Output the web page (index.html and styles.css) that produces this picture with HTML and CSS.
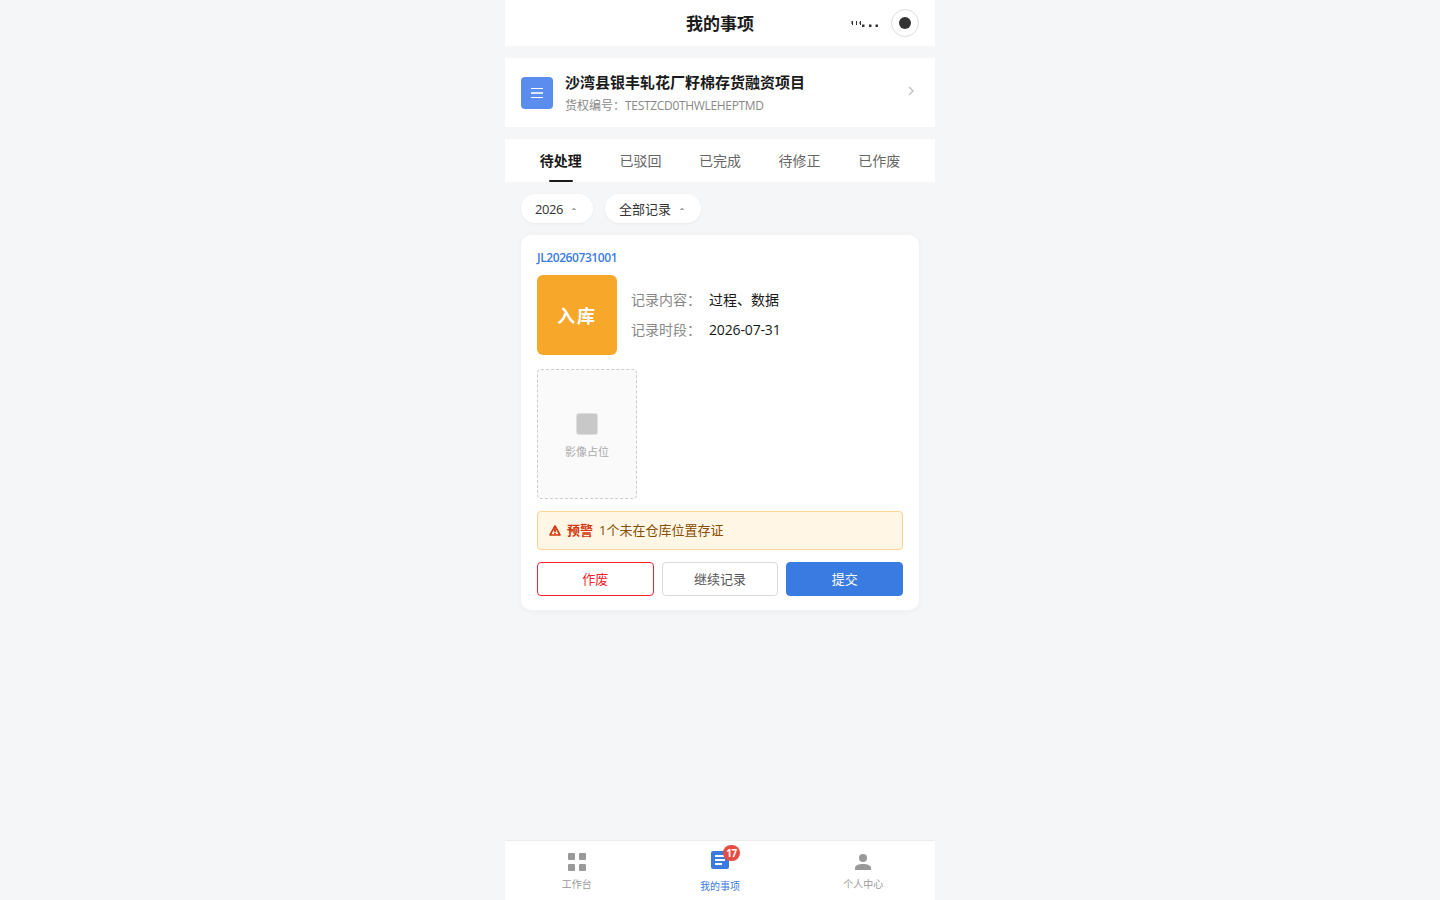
FILE: index.html
```html
<!DOCTYPE html>
<html lang="zh-CN">
<head>
<meta charset="UTF-8">
<title>我的事项</title>
<link rel="stylesheet" href="styles.css">
</head>
<body>
<div class="app">
  <header class="header">
    <h1 class="header-title">我的事项</h1>
    <div class="header-actions">
      <svg class="more" width="30" height="8" viewBox="0 0 30 8"><g fill="#333"><path d="M2 1h1v4H2zM6 1h1v4H6zM10 1h1v4h-1z"/><path d="M1 1h1v3H1zM9 2h1v2H9z" opacity=".5"/><path d="M12 4.500h2.500v2.500H12zM19 4.500h2.500v2.500H19zM25.500 4.500H28v2.500h-2.500z"/></g></svg>
      <span class="capsule"><span class="capsule-dot"></span></span>
    </div>
  </header>

  <section class="project">
    <div class="project-icon">
      <svg width="12" height="10" viewBox="0 0 12 10"><path d="M0 0h12v1H0zM0 9h12v1H0z" fill="#fff"/><path d="M0 4h12v2H0z" fill="#fff" opacity=".8"/></svg>
    </div>
    <div class="project-body">
      <div class="project-name">沙湾县银丰轧花厂籽棉存货融资项目</div>
      <div class="project-code">货权编号：<span class="code">TESTZCD0THWLEHEPTMD</span></div>
    </div>
    <svg class="chevron" width="8" height="10" viewBox="0 0 8 10"><path d="M2 1l4 4-4 4" fill="none" stroke="#c4c4c4" stroke-width="1.500"/></svg>
  </section>

  <nav class="tabs">
    <div class="tab active">待处理</div>
    <div class="tab">已驳回</div>
    <div class="tab">已完成</div>
    <div class="tab">待修正</div>
    <div class="tab">已作废</div>
  </nav>

  <main class="content">
    <div class="filters">
      <div class="filter"><span class="year">2026</span><svg class="caret" width="4" height="2" viewBox="0 0 4 2"><path d="M0 2V1h1V0h2v1h1v1z" fill="#aaa"/></svg></div>
      <div class="filter"><span>全部记录</span><svg class="caret" width="4" height="2" viewBox="0 0 4 2"><path d="M0 2V1h1V0h2v1h1v1z" fill="#aaa"/></svg></div>
    </div>

    <article class="card">
      <div class="card-no"><span>JL20260731001</span></div>
      <div class="summary">
        <div class="type">入库</div>
        <div class="info">
          <div class="info-row"><span class="label">记录内容：</span><span class="value">过程、数据</span></div>
          <div class="info-row"><span class="label">记录时段：</span><span class="value date">2026-07-31</span></div>
        </div>
      </div>
      <div class="photo">
        <div class="photo-icon"></div>
        <div class="photo-text">影像占位</div>
      </div>
      <div class="alert">
        <svg width="12" height="11" viewBox="0 0 12 11"><path d="M6 1L11 10H1z" fill="none" stroke="#d4380d" stroke-width="1.600" stroke-linejoin="round"/><path d="M6 3.500v3.500M6 7.800v1.400" stroke="#d4380d" stroke-width="1.800"/></svg>
        <strong class="alert-tag">预警</strong>
        <span class="alert-text">1个未在仓库位置存证</span>
      </div>
      <div class="actions">
        <button class="btn danger">作废</button>
        <button class="btn">继续记录</button>
        <button class="btn primary">提交</button>
      </div>
    </article>
  </main>

  <nav class="tabbar">
    <div class="tabbar-item">
      <svg width="18" height="18" viewBox="0 0 18 18" fill="#999"><rect width="7" height="7" rx="1"/><rect x="11" width="7" height="7" rx="1"/><rect y="11" width="7" height="7" rx="1"/><rect x="11" y="11" width="7" height="7" rx="1"/></svg>
      <span>工作台</span>
    </div>
    <div class="tabbar-item current">
      <div class="icon-wrap">
        <svg width="18" height="18" viewBox="0 0 18 18"><rect width="18" height="18" rx="2" fill="#3a7be2"/><path d="M4 4h10v2H4zM4 8h10v2H4zM4 12h7v2H4z" fill="#fff"/></svg>
        <span class="badge">17</span>
      </div>
      <span>我的事项</span>
    </div>
    <div class="tabbar-item">
      <svg width="18" height="18" viewBox="0 0 18 18" fill="#999"><circle cx="9" cy="5" r="4"/><path d="M1 17v-2c0-2.700 4-4 8-4s8 1.300 8 4v2z"/></svg>
      <span>个人中心</span>
    </div>
  </nav>
</div>
</body>
</html>
```
FILE: styles.css
```css
* { box-sizing: border-box; }
body {
  margin: 0;
  background: #f4f6f8;
  color: #1a1a1a;
  font-family: "Open Sans", "Noto Sans CJK SC", sans-serif;
  font-size: 14px;
}
svg { display: block; flex: none; }
.app {
  width: 430px;
  height: 900px;
  margin: 0 auto;
  display: flex;
  flex-direction: column;
}
.header {
  height: 46px;
  background: #fff;
  display: grid;
  grid-template-columns: 1fr auto 1fr;
  align-items: center;
  padding: 0 16px;
}
.header-title {
  grid-column: 2;
  margin: 0;
  padding-top: 2px;
  font-size: 17px;
  line-height: 24px;
  font-weight: 700;
}
.header-actions {
  display: flex;
  align-items: center;
  justify-content: flex-end;
  gap: 11px;
}
.more { margin-top: 2px; }
.capsule {
  width: 28px;
  height: 28px;
  border: 1px solid #ddd;
  border-radius: 50%;
  display: flex;
  align-items: center;
  justify-content: center;
}
.capsule-dot { width: 12px; height: 12px; border-radius: 50%; background: #333; }

.project {
  height: 69px;
  margin-top: 12px;
  padding: 0 20px 0 16px;
  background: #fff;
  display: flex;
  align-items: center;
  gap: 12px;
}
.project-icon {
  width: 32px;
  height: 32px;
  border-radius: 4px;
  background: #5b8def;
  display: flex;
  align-items: center;
  justify-content: center;
}
.project-body { flex: 1; }
.project-name { font-size: 15px; line-height: 22px; font-weight: 700; }
.project-code { margin-top: 4px; font-size: 12px; line-height: 18px; color: #888; white-space: nowrap; }
.code { letter-spacing: -0.32px; }
.chevron { margin-bottom: 3px; }

.tabs {
  height: 43px;
  margin-top: 12px;
  padding: 0 16px;
  background: #fff;
  display: flex;
}
.tab {
  flex: 1;
  display: flex;
  flex-direction: column;
  align-items: center;
  padding-top: 12px;
  line-height: 20px;
  color: #666;
}
.tab.active { color: #1a1a1a; font-weight: 700; }
.tab.active::after {
  content: "";
  width: 24px;
  height: 2px;
  margin-top: 9px;
  border-radius: 1px;
  background: #1a1a1a;
}

.content { flex: 1; padding: 12px 16px; }
.filters { display: flex; gap: 12px; }
.filter {
  height: 29px;
  padding: 0 17px 0 14px;
  border-radius: 15px;
  background: #fff;
  box-shadow: 0 1px 3px rgba(0, 0, 0, .05);
  display: flex;
  align-items: center;
  gap: 9px;
  font-size: 13px;
  line-height: 18px;
  color: #333;
}
.year { width: 28px; letter-spacing: -0.4px; }

.card {
  height: 375px;
  margin-top: 12px;
  padding: 14px 16px;
  border-radius: 10px;
  background: #fff;
  box-shadow: 0 1px 6px rgba(0, 0, 0, .04);
}
.card-no { font-size: 12px; line-height: 18px; color: #3a7be2; font-weight: 600; letter-spacing: -0.42px; }
.summary { display: flex; gap: 14px; margin-top: 8px; }
.type {
  width: 80px;
  height: 80px;
  border-radius: 6px;
  background: #f7a72a;
  color: #fff;
  font-size: 18px;
  font-weight: 700;
  letter-spacing: 2px;
  display: flex;
  align-items: center;
  justify-content: center;
}
.info { padding-top: 14px; display: flex; flex-direction: column; gap: 8px; }
.info-row { display: flex; gap: 8px; line-height: 22px; }
.label { color: #888; }
.value { color: #1a1a1a; }
.date { letter-spacing: -0.15px; }

.photo {
  width: 100px;
  height: 130px;
  margin-top: 14px;
  padding-top: 5px;
  border: 1px dashed #ccc;
  border-radius: 4px;
  background: #fafafa;
  display: flex;
  flex-direction: column;
  align-items: center;
  justify-content: center;
  gap: 9px;
}
.photo-icon { width: 22px; height: 22px; border: 1px solid #dedede; border-radius: 3px; background: #c8c8c8; }
.photo-text { font-size: 11px; line-height: 16px; color: #aaa; }

.alert {
  height: 39px;
  margin-top: 12px;
  padding: 0 12px 1px 11px;
  border: 1px solid #ffd591;
  border-radius: 4px;
  background: #fff6e5;
  display: flex;
  align-items: center;
  font-size: 13px;
  line-height: 20px;
}
.alert svg { margin-top: 1px; }
.alert-tag { margin-left: 6px; color: #d4380d; }
.alert-text { margin-left: 6px; color: #874d00; }

.actions { display: flex; gap: 8px; margin-top: 12px; }
.btn {
  flex: 1;
  height: 34px;
  padding: 0 0 2px;
  border: 1px solid #d9d9d9;
  border-radius: 4px;
  background: #fff;
  color: #555;
  font: inherit;
  font-size: 13px;
}
.btn.danger { border-color: #f5222d; color: #f5222d; }
.btn.primary { border-color: #3a7be2; background: #3a7be2; color: #fff; }

.tabbar {
  height: 60px;
  border-top: 1px solid #ebebeb;
  background: #fff;
  display: flex;
}
.tabbar-item {
  flex: 1;
  display: flex;
  flex-direction: column;
  align-items: center;
  padding-top: 12px;
  gap: 6px;
  font-size: 10px;
  line-height: 14px;
  color: #999;
}
.tabbar-item.current { padding-top: 10px; gap: 10px; color: #3a7be2; }
.icon-wrap { position: relative; }
.badge {
  position: absolute;
  top: -6px;
  left: 12px;
  width: 17px;
  height: 16px;
  border-radius: 8px;
  background: #e64d43;
  color: #fff;
  font-size: 10px;
  line-height: 16px;
  font-weight: 700;
  letter-spacing: -0.5px;
  text-align: center;
}
```
